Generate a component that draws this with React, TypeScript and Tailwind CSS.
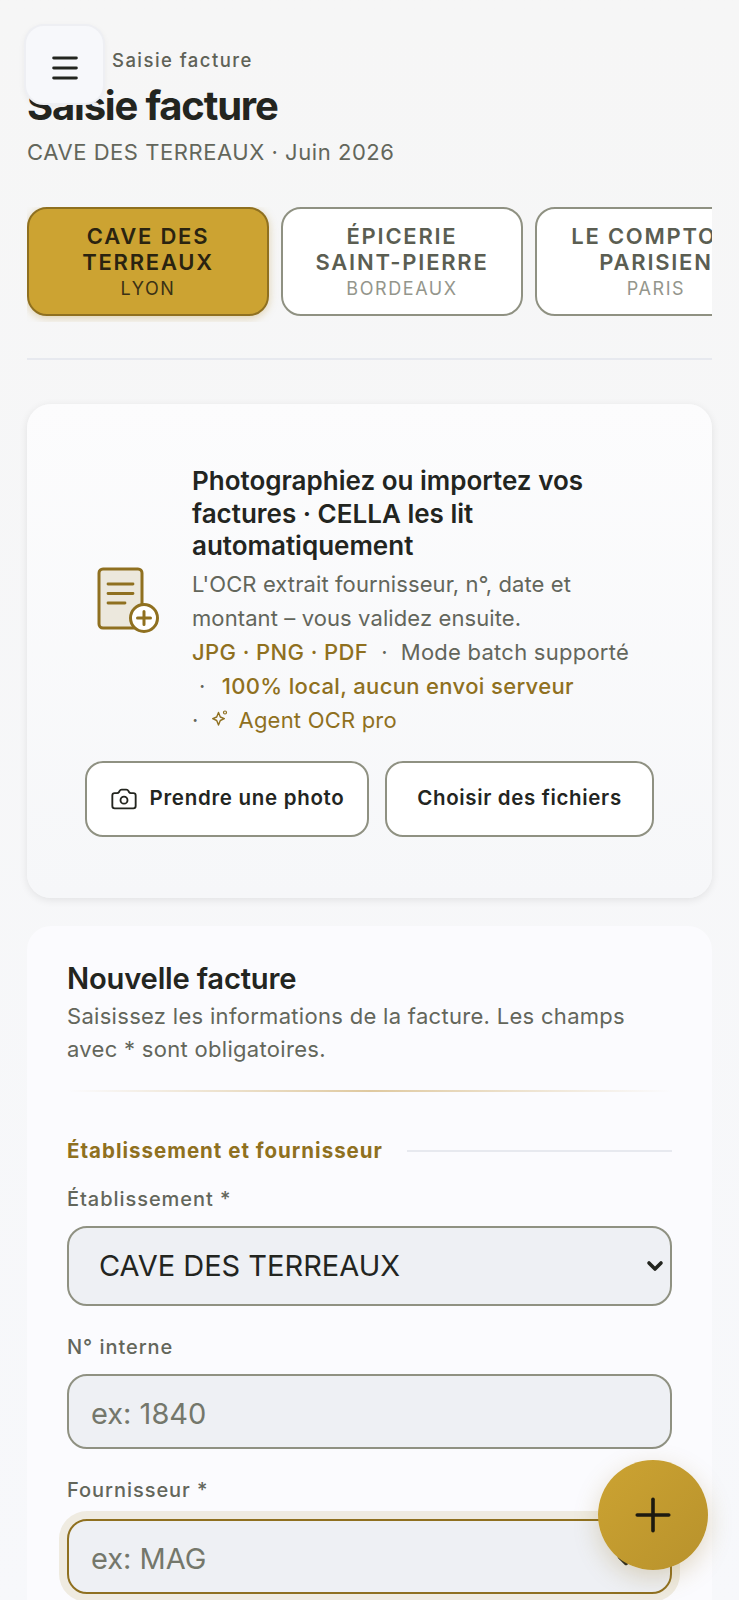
import { Camera, ChevronDown, Menu, Plus } from "lucide-react"

const sites = [
  { name: ["CAVE DES", "TERREAUX"], city: "LYON", active: true },
  { name: ["ÉPICERIE", "SAINT-PIERRE"], city: "BORDEAUX", active: false },
  { name: ["LE COMPTOIR", "PARISIEN"], city: "PARIS", active: false },
]

function DocIcon() {
  return (
    <svg width="64" height="68" viewBox="0 0 64 68" fill="none" className="shrink-0">
      <rect x="2" y="2" width="43" height="59" rx="4" fill="#ece8dd" stroke="#8f7020" strokeWidth="3" />
      <path d="M11 17h25M11 26.500h25M11 36h17" stroke="#8f7020" strokeWidth="2.800" strokeLinecap="round" />
      <circle cx="47" cy="51" r="13.500" fill="#fff" stroke="#8f7020" strokeWidth="3" />
      <path d="M47 44.500v13M40.500 51h13" stroke="#8f7020" strokeWidth="3" strokeLinecap="round" />
    </svg>
  )
}

function Sparkle() {
  return (
    <svg width="18" height="18" viewBox="0 0 18 18" fill="none" className="mr-[10px] inline-block align-[1px]">
      <path d="M7.500 3.500 9.300 8l4 1.700-4 1.800-1.800 4.500-1.800-4.500-4-1.800 4-1.700z" stroke="#8f7020" strokeWidth="1.400" strokeLinejoin="round" />
      <circle cx="14" cy="3.500" r="1.500" stroke="#8f7020" strokeWidth="1.200" />
    </svg>
  )
}

export default function App() {
  return (
    <div className="relative h-[1600px] overflow-hidden bg-gradient-to-b from-[#f6f6f6] to-[#f7f8fb] font-['Inter',sans-serif] text-[#23251f]">
      {/* Menu button */}
      <button className="absolute left-[24px] top-[24px] z-20 flex h-[81px] w-[81px] items-center justify-center rounded-[20px] border-2 border-[#eeeff3] bg-[#f7f8fb] shadow-[0_2px_6px_rgba(0,0,0,0.05)]">
        <Menu className="mt-[7px] h-[34px] w-[34px] text-[#23251f]" strokeWidth={2.1} />
      </button>

      <div className="px-[27px] pt-[48px]">
        <p className="pl-[85px] text-[18.500px] font-medium leading-[24px] tracking-[1.45px] text-[#5f6257]">Saisie facture</p>
        <h1 className="mt-[10px] text-[40px] font-bold leading-[48px] tracking-[-1.2px]">Saisie facture</h1>
        <p className="mt-[6px] text-[22px] leading-[32px] tracking-[0.55px] text-[#63665b]">CAVE DES TERREAUX · Juin 2026</p>

        {/* Site tabs */}
        <div className="mt-[39px] flex h-[115px] gap-[12px] overflow-hidden">
          {sites.map((s) => (
            <div
              key={s.city}
              className={
                s.active
                  ? "flex h-[109px] w-[242px] shrink-0 flex-col items-center justify-center rounded-[20px] border-2 border-[#8f7020] bg-[#cca332] pt-[2px] text-center text-[#2a2310] shadow-[0_2px_8px_rgba(180,140,40,0.35)]"
                  : "flex h-[109px] w-[242px] shrink-0 flex-col items-center justify-center rounded-[20px] border-2 border-[#8f9182] bg-white pt-[2px] text-center text-[#5b5e52]"
              }
            >
              {s.name.map((line) => (
                <span key={line} className="whitespace-nowrap text-[22px] font-semibold leading-[26px] tracking-[1.75px]">
                  {line}
                </span>
              ))}
              <span className={s.active ? "mt-[1px] text-[18px] leading-[26px] tracking-[1.6px] text-[#3b3115]" : "mt-[1px] text-[18px] leading-[26px] tracking-[1.6px] text-[#94968c]"}>{s.city}</span>
            </div>
          ))}
        </div>

        <div className="mt-[36px] h-[2px] bg-[#e7e9ef]" />

        {/* Import card */}
        <section className="mt-[44px] h-[494px] rounded-[24px] bg-gradient-to-b from-[#fcfcfd] to-[#f6f7f9] pt-[61px] shadow-[0_2px_8px_rgba(0,0,0,0.09)]">
          <div className="flex items-center pl-[70px] pr-[49px]">
            <DocIcon />
            <div className="ml-[31px]">
              <h2 className="text-[26px] font-semibold leading-[32.500px] text-[#23251f]">
                Photographiez ou importez vos factures · CELLA les lit automatiquement
              </h2>
              <p className="mt-[4px] text-[22px] leading-[34px] tracking-[0.1px] text-[#63665b]">
                L'OCR extrait fournisseur, n°, date et montant – vous validez ensuite.
              </p>
              <p className="whitespace-nowrap text-[22px] leading-[34px] tracking-[0.25px] text-[#63665b]">
                <span className="font-medium tracking-[0.4px] text-[#8f7020]">JPG · PNG · PDF</span>
                <span className="mx-[13px]">·</span>
                Mode batch supporté
              </p>
              <p className="whitespace-nowrap text-[22px] leading-[34px] tracking-[0.35px] text-[#8f7020]">
                <span className="mx-[7px] text-[#63665b]">·</span>
                <span className="ml-[9px] font-medium">100% local, aucun envoi serveur</span>
              </p>
              <p className="text-[22px] leading-[34px] tracking-[0.2px] text-[#8f7020]">
                <span className="mr-[12px] text-[#63665b]">·</span>
                <Sparkle />
                Agent OCR pro
              </p>
            </div>
          </div>
          <div className="mt-[24px] flex gap-[16px] pl-[58px]">
            <button className="flex h-[76px] w-[284px] items-center justify-center gap-[12px] rounded-[18px] border-2 border-[#8f9182] bg-white text-[20.500px] font-semibold tracking-[0.7px] text-[#23251f]">
              <Camera className="h-[28px] w-[28px]" strokeWidth={1.6} />
              Prendre une photo
            </button>
            <button className="h-[76px] w-[269px] rounded-[18px] border-2 border-[#8f9182] bg-white text-[20.500px] font-semibold tracking-[0.65px] text-[#23251f]">
              Choisir des fichiers
            </button>
          </div>
        </section>

        {/* Invoice form */}
        <section className="mt-[28px] rounded-t-[24px] bg-[#fbfbfe] px-[40px] pt-[35px] pb-[60px]">
          <h2 className="text-[29.200px] font-semibold leading-[36px] tracking-[-0.2px] text-[#23251f]">Nouvelle facture</h2>
          <p className="mt-[3px] text-[22px] leading-[33px] tracking-[0.3px] text-[#63665b]">
            Saisissez les informations de la facture. Les champs avec * sont obligatoires.
          </p>
          <div className="mt-[24px] h-[2px] bg-gradient-to-r from-transparent via-[#dfc9a0] to-transparent" />

          <div className="mt-[46px] flex items-center gap-[24px]">
            <h3 className="whitespace-nowrap text-[20.500px] font-bold leading-[26px] tracking-[1px] text-[#8f7020]">Établissement et fournisseur</h3>
            <div className="h-[2px] flex-1 bg-[#e7e9ef]" />
          </div>

          <label className="mt-[22px] block text-[20px] font-medium leading-[26px] tracking-[0.95px] text-[#63665b]">Établissement *</label>
          <div className="relative mt-[14px]">
            <select className="block h-[80px] w-full appearance-none rounded-[20px] border-2 border-[#8f9182] bg-[#eef0f4] pl-[30px] text-[29px] text-[#23251f] outline-none">
              <option>CAVE DES TERREAUX</option>
            </select>
            <ChevronDown className="pointer-events-none absolute right-[5px] top-[28px] h-[24px] w-[24px] text-[#23251f]" strokeWidth={3.6} />
          </div>

          <label className="mt-[28px] block text-[20px] font-medium leading-[26px] tracking-[0.95px] text-[#63665b]">N° interne</label>
          <input
            placeholder="ex: 1840"
            className="mt-[14px] block h-[75px] w-full rounded-[20px] border-2 border-[#8f9182] bg-[#eef0f4] pl-[22px] pt-[3px] text-[29px] text-[#23251f] outline-none placeholder:text-[#74776b]"
          />

          <label className="mt-[28px] block text-[20px] font-medium leading-[26px] tracking-[0.95px] text-[#63665b]">Fournisseur *</label>
          <div className="relative mt-[16px]">
            <input
              placeholder="ex: MAG"
              className="block h-[75px] w-full rounded-[20px] border-2 border-[#8f7020] bg-[#eef0f4] pl-[22px] pt-[3px] text-[29px] text-[#23251f] shadow-[0_0_0_8px_#efebe1] outline-none placeholder:text-[#74776b]"
            />
            <ChevronDown className="pointer-events-none absolute right-[33px] top-[28px] h-[26px] w-[26px] text-[#23251f]" strokeWidth={3.6} />
          </div>
        </section>
      </div>

      {/* Add button */}
      <button className="absolute right-[31px] top-[1460px] z-20 flex h-[110px] w-[110px] items-center justify-center rounded-full bg-gradient-to-br from-[#cca332] to-[#b8922c] shadow-[0_8px_24px_rgba(150,115,30,0.25)]">
        <Plus className="h-[54px] w-[54px] text-[#1d1a10]" strokeWidth={1.6} />
      </button>
    </div>
  )
}
